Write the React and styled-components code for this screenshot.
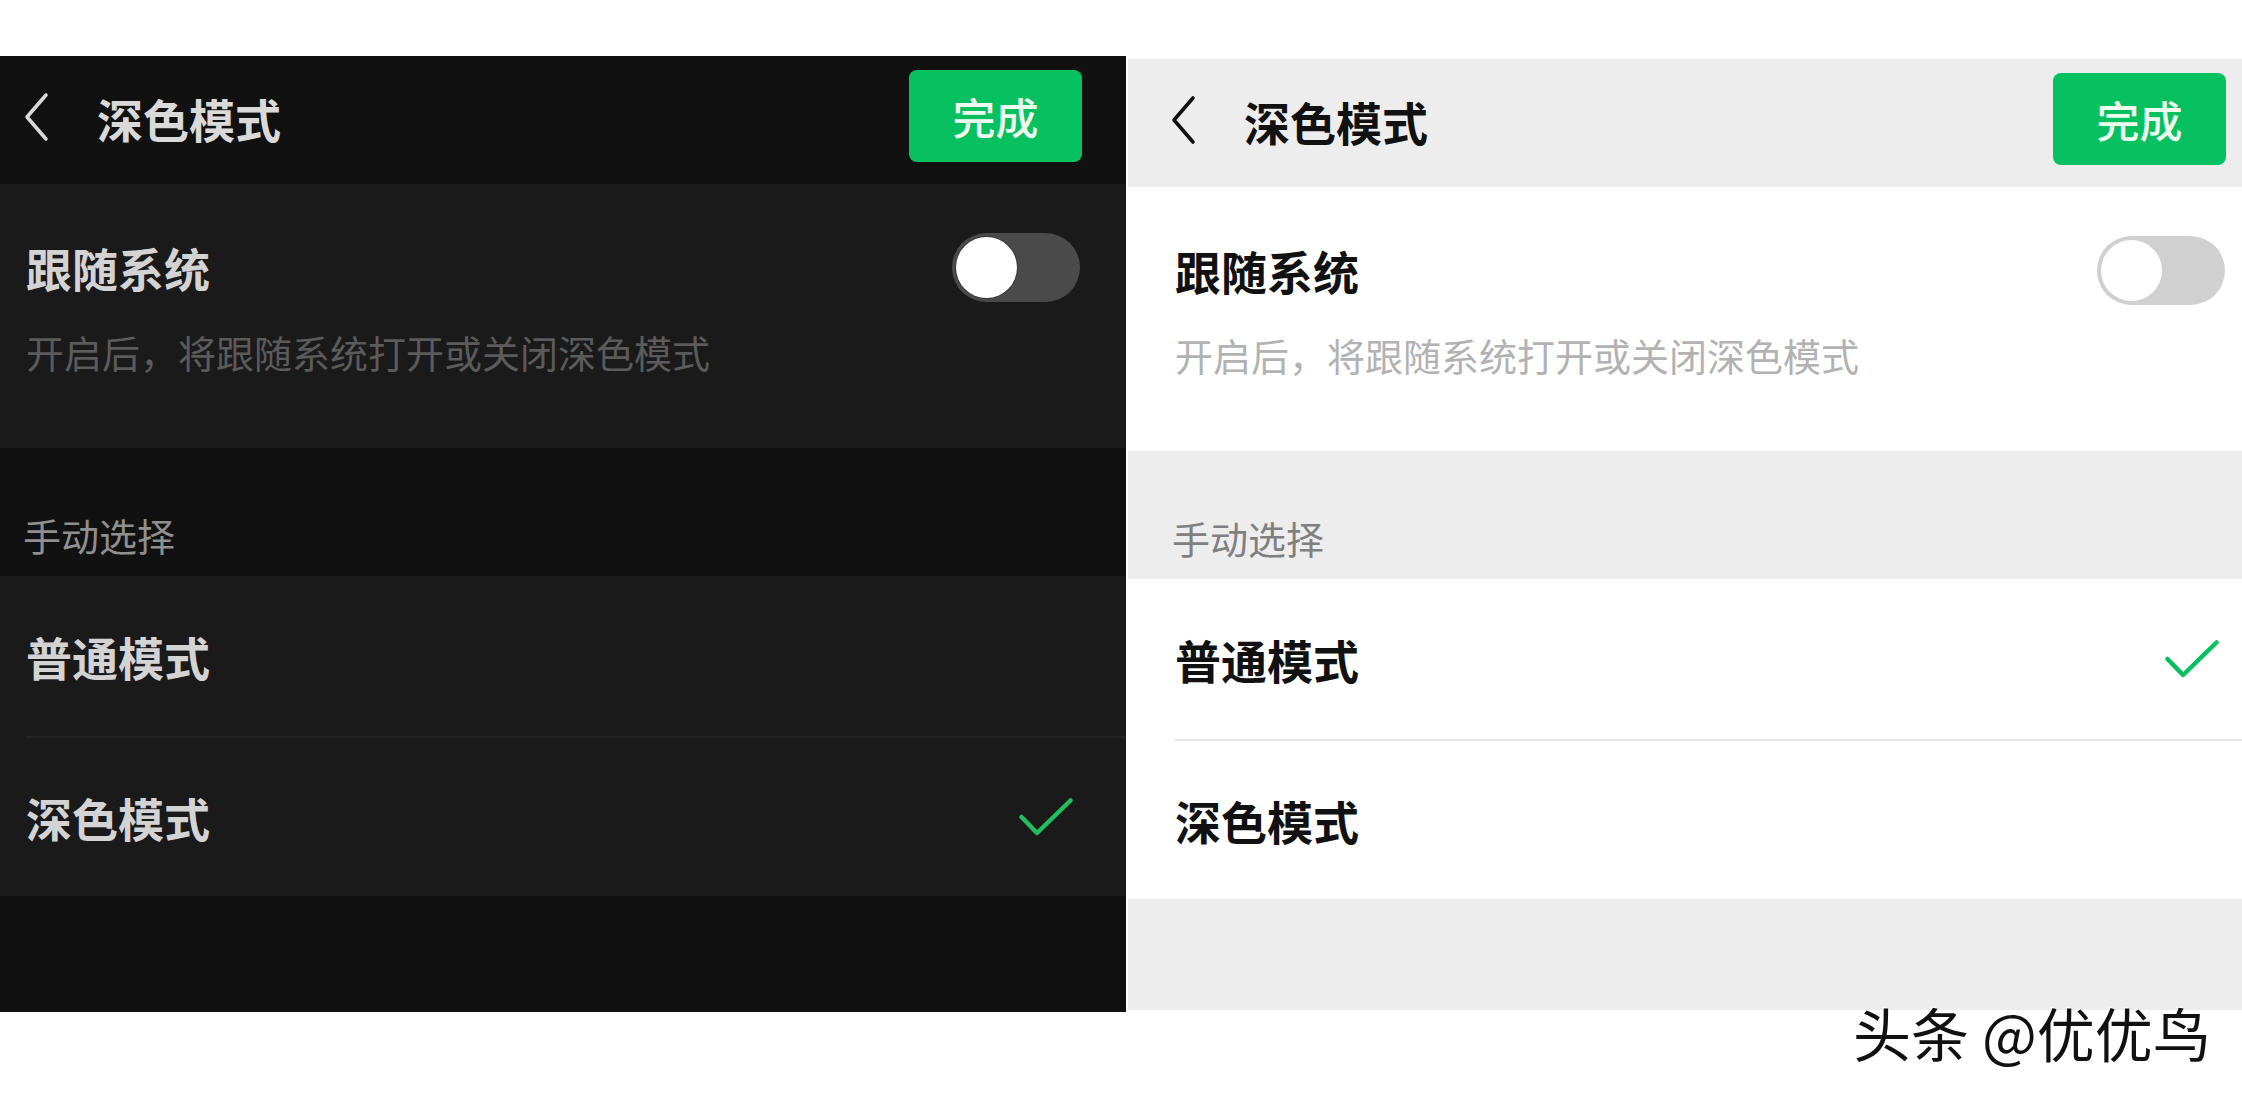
import React from 'react';
import styled, { createGlobalStyle } from 'styled-components';

const Global = createGlobalStyle`
  html, body { margin: 0; padding: 0; background: #ffffff; }
  body { font-family: "Noto Sans CJK SC", "Noto Sans", sans-serif; }
`;

const palettes = {
  dark: {
    header: '#111111', card: '#1a1a1a', band: '#111111', title: '#d9d9d9', text: '#d3d3d3',
    desc: '#5b5b5b', label: '#8f8f8f', divider: '#232323', track: '#4a4a4a', knobEdge: '#3a3a3a',
    check: '#1fbf5f',
  },
  light: {
    header: '#ededed', card: '#ffffff', band: '#ededed', title: '#111111', text: '#111111',
    desc: '#b2b2b2', label: '#808080', divider: '#e8e8e8', track: '#d0d0d0', knobEdge: '#d0d0d0',
    check: '#07c160',
  },
};

const Page = styled.div`
  position: relative;
  width: 2242px;
  height: 1103px;
  display: flex;
  align-items: flex-start;
  gap: 2px;
  overflow: hidden;
  background: #ffffff;
`;

const Screen = styled.section`
  width: ${(p) => p.$w}px;
  height: ${(p) => p.$h}px;
  margin-top: ${(p) => p.$top}px;
  background: ${(p) => p.$c.band};
  display: flex;
  flex-direction: column;
  flex-shrink: 0;
`;

const Header = styled.header`
  height: 128px;
  flex-shrink: 0;
  background: ${(p) => p.$c.header};
  display: flex;
  align-items: center;
  padding: 0 ${(p) => p.$pr}px 0 ${(p) => p.$pl}px;
`;

const Back = styled.svg`
  width: 26px;
  height: 50px;
  flex-shrink: 0;
  margin-top: -6px;
`;

const Title = styled.h1`
  margin: 0 0 0 48px;
  font-size: 46px;
  line-height: 54px;
  font-weight: 700;
  color: ${(p) => p.$c.title};
  margin-top: -4px;
`;

const DoneButton = styled.button`
  margin-left: auto;
  margin-top: -8px;
  width: 173px;
  height: 92px;
  border: none;
  border-radius: 8px;
  background: #07c160;
  color: #eefcef;
  font-family: "Noto Sans CJK SC", sans-serif;
  font-size: 43px;
  font-weight: 500;
  padding: 0;
`;

const FollowCard = styled.div`
  height: 264px;
  flex-shrink: 0;
  background: ${(p) => p.$c.card};
  padding: 56px ${(p) => p.$pr}px 0 ${(p) => p.$pl}px;
  box-sizing: border-box;
`;

const FollowRow = styled.div`
  height: 54px;
  display: flex;
  align-items: center;
  justify-content: space-between;
`;

const ItemText = styled.span`
  font-size: 46px;
  line-height: 54px;
  font-weight: 700;
  color: ${(p) => p.$c.text};
`;

const Desc = styled.p`
  margin: 31px 0 0;
  font-size: 38px;
  line-height: 54px;
  color: ${(p) => p.$c.desc};
`;

const Track = styled.div`
  width: 128px;
  height: 69px;
  border-radius: 35px;
  background: ${(p) => p.$c.track};
  display: flex;
  align-items: center;
  padding: 0 4px;
  box-sizing: border-box;
`;

const Knob = styled.div`
  width: 61px;
  height: 61px;
  border-radius: 50%;
  background: #ffffff;
  box-shadow: 0 0 0 1px ${(p) => p.$c.knobEdge};
`;

const Band = styled.div`
  height: 128px;
  flex-shrink: 0;
  display: flex;
  align-items: flex-end;
  padding: 0 0 14px ${(p) => p.$pl}px;
  box-sizing: border-box;
`;

const BandLabel = styled.span`
  font-size: 38px;
  line-height: 54px;
  color: ${(p) => p.$c.label};
`;

const OptionList = styled.div`
  background: ${(p) => p.$c.card};
  flex-shrink: 0;
  padding-left: ${(p) => p.$pl}px;
`;

const OptionRow = styled.div`
  height: 160px;
  display: flex;
  align-items: center;
  justify-content: space-between;
  padding-right: ${(p) => p.$pr}px;
  border-top: ${(p) => (p.$divider ? `2px solid ${p.$c.divider}` : 'none')};
  box-sizing: border-box;
`;

const Check = styled.svg`
  width: 54px;
  height: 38px;
`;

const Watermark = styled.div`
  position: absolute;
  left: 1853px;
  top: 997px;
  font-size: 58px;
  line-height: 70px;
  color: #111111;
  text-shadow: 1px 1px 0 #ffffff, -1px -1px 0 #ffffff;
  white-space: nowrap;
`;

const screens = [
  { key: 'dark', w: 1126, h: 956, top: 56, pl: 26, pr: 53, fpr: 46, hpl: 23, hpr: 44, selected: 1 },
  { key: 'light', w: 1114, h: 951, top: 59, pl: 47, pr: 23, fpr: 17, hpl: 42, hpr: 16, selected: 0 },
];

const options = ['普通模式', '深色模式'];

function PhoneScreen({ cfg }) {
  const c = palettes[cfg.key];
  return (
    <Screen $w={cfg.w} $h={cfg.h} $top={cfg.top} $c={c}>
      <Header $c={c} $pl={cfg.hpl} $pr={cfg.hpr}>
        <Back viewBox="0 0 26 50" fill="none">
          <polyline points="23,3 4,25 23,47" stroke={c.title} strokeWidth="3.6" strokeLinecap="round" strokeLinejoin="round" />
        </Back>
        <Title $c={c}>深色模式</Title>
        <DoneButton>完成</DoneButton>
      </Header>
      <FollowCard $c={c} $pl={cfg.pl} $pr={cfg.fpr}>
        <FollowRow>
          <ItemText $c={c}>跟随系统</ItemText>
          <Track $c={c}>
            <Knob $c={c} />
          </Track>
        </FollowRow>
        <Desc $c={c}>开启后，将跟随系统打开或关闭深色模式</Desc>
      </FollowCard>
      <Band $pl={cfg.pl - 3}>
        <BandLabel $c={c}>手动选择</BandLabel>
      </Band>
      <OptionList $c={c} $pl={cfg.pl}>
        {options.map((o, i) => (
          <OptionRow key={o} $c={c} $pr={cfg.pr} $divider={i > 0}>
            <ItemText $c={c}>{o}</ItemText>
            {cfg.selected === i && (
              <Check viewBox="0 0 54 38" fill="none">
                <polyline points="2.5,19 18,35 51.5,2.5" stroke={c.check} strokeWidth="4.5" strokeLinecap="round" strokeLinejoin="round" />
              </Check>
            )}
          </OptionRow>
        ))}
      </OptionList>
    </Screen>
  );
}

export default function App() {
  return (
    <>
      <Global />
      <Page>
        {screens.map((s) => (
          <PhoneScreen key={s.key} cfg={s} />
        ))}
        <Watermark>头条 @优优鸟</Watermark>
      </Page>
    </>
  );
}
